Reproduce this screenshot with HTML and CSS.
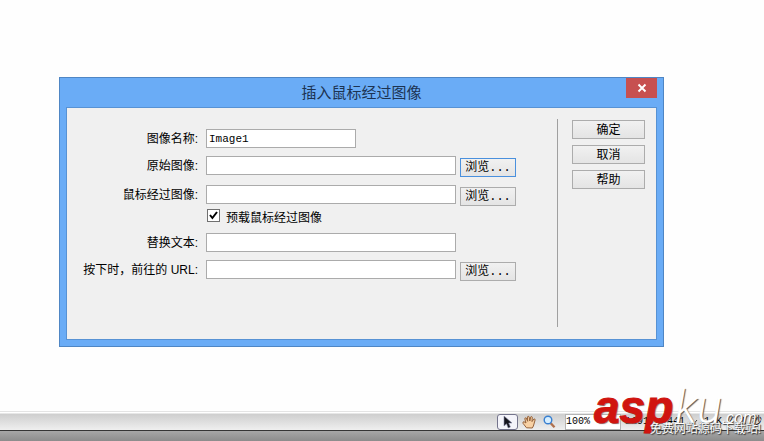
FILE: index.html
```html
<!DOCTYPE html>
<html lang="zh-CN">
<head>
    <meta charset="UTF-8">
    <meta name="viewport" content="width=device-width, initial-scale=1.0">
    <title>插入鼠标经过图像</title>
    <link rel="stylesheet" href="styles.css">
</head>
<body>

    <main class="workspace">
        <section class="dialog" role="dialog" aria-labelledby="dialogTitle">
            <header class="titlebar">
                <h1 id="dialogTitle">插入鼠标经过图像</h1>
                <button type="button" class="close" aria-label="关闭">
                    <svg width="10" height="10" viewBox="0 0 10 10"><path d="M1.5 1.5L8.5 8.5M8.5 1.5L1.5 8.5" stroke="#fff" stroke-width="1.9"/></svg>
                </button>
            </header>

            <form class="panel">
                <div class="fields">
                    <label for="imageName">图像名称:</label>
                    <input type="text" id="imageName" class="short" value="Image1">

                    <label for="original">原始图像:</label>
                    <input type="text" id="original">
                    <button type="button" class="browse active">浏览...</button>

                    <label for="rollover">鼠标经过图像:</label>
                    <input type="text" id="rollover">
                    <button type="button" class="browse">浏览...</button>

                    <div class="check">
                        <input type="checkbox" id="preload" checked>
                        <label for="preload">预载鼠标经过图像</label>
                    </div>

                    <label for="altText">替换文本:</label>
                    <input type="text" id="altText">

                    <label for="url">按下时，前往的 URL:</label>
                    <input type="text" id="url">
                    <button type="button" class="browse">浏览...</button>
                </div>

                <div class="actions">
                    <button type="button">确定</button>
                    <button type="button">取消</button>
                    <button type="button">帮助</button>
                </div>
            </form>
        </section>
    </main>

    <footer class="statusbar">
        <button type="button" class="tool selected" aria-label="选取工具">
            <svg width="12" height="14" viewBox="0 0 12 14"><path d="M2 1V11L4.5 8.8L6.2 13L8.4 12L6.7 8H10Z" fill="#15151d" stroke="#888ca8" stroke-width=".6"/></svg>
        </button>
        <button type="button" class="tool" aria-label="手形工具">
            <svg width="15" height="14" viewBox="0 0 15 14"><path d="M4.5 12.8L1 8.3Q.5 6.7 2 6.7L4 8L2.8 3.8Q2.9 2.3 4.2 3L5.7 6.3L5.4 2Q6 .5 7.1 1.7L7.8 6L8.8 1.8Q9.8 1 10.3 2.3L10 6.6L11.8 4Q13.2 3.4 13.1 5L11.4 11L10.3 13Z" fill="#f8d1a4" stroke="#96633c"/></svg>
        </button>
        <button type="button" class="tool" aria-label="缩放工具">
            <svg width="13" height="14" viewBox="0 0 13 14"><path d="M7.5 8L11.5 12.3" stroke="#b0714e" stroke-width="2.4"/><circle cx="5" cy="5" r="3.8" fill="#d6eeff" stroke="#387fd0" stroke-width="1.4"/></svg>
        </button>
        <select class="zoom" aria-label="缩放比率">
            <option>100%</option>
        </select>
        <div class="info">
            <span>1191 x 441</span>
            <svg width="7" height="5" viewBox="0 0 7 5"><path d="M1 1L3.5 4L6 1" fill="none" stroke="#444"/></svg>
            <span>1 K / 1 秒</span>
        </div>
    </footer>
    <div class="edge"></div>

    <div class="watermark">
        <div class="brand"><b>asp</b><i>ku</i><small>.com</small></div>
        <p>免费网站源码下载站!</p>
    </div>

</body>
</html>
```
FILE: styles.css
```css
* {
    box-sizing: border-box;
}
body {
    position: relative;
    display: flex;
    flex-direction: column;
    min-height: 100vh;
    margin: 0;
    background-color: #fefefe;
    color: black;
    font: 12px/18px "Liberation Sans", "Noto Sans CJK SC", sans-serif;
}
button, input, select {
    margin: 0;
    padding: 0;
    color: black;
    font: inherit;
}
.workspace {
    flex: 1;
    padding: 77px 100px 0 59px;
}
.dialog {
    padding: 0 6px 6px;
    border: 1px solid #4f86c4;
    background-color: #6aacf6;
}
.titlebar {
    display: grid;
    grid-template-columns: 31px 1fr 31px;
    align-items: start;
    height: 29px;
}
.titlebar h1 {
    grid-column: 2;
    margin: 0;
    color: #1c3352;
    font-size: 15px;
    font-weight: normal;
    line-height: 30px;
    text-align: center;
}
.close {
    display: flex;
    align-items: center;
    justify-content: center;
    height: 20px;
    border: none;
    background-color: #c75050;
}
.panel {
    display: flex;
    justify-content: space-between;
    padding: 11px 11px 12px 10px;
    border: 1px solid #5792d4;
    background-color: #f0f0f0;
}
.fields {
    display: grid;
    grid-template-columns: 125px 250px 56px;
    grid-template-rows: 27px 29px 24px 24px 27px;
    column-gap: 4px;
    align-items: start;
    padding-top: 10px;
}
.fields > label {
    grid-column: 1;
    padding-right: 4px;
    line-height: 20px;
    text-align: right;
    white-space: nowrap;
}
.fields > input {
    grid-column: 2;
    width: 100%;
    height: 19px;
    padding: 0 2px;
    border: 1px solid #ababab;
    background-color: white;
    font: 11px "Liberation Mono", monospace;
}
.fields > .short {
    width: 150px;
}
.browse, .actions button {
    height: 19px;
    border: 1px solid #acacac;
    background: linear-gradient(#f1f1f1, #e4e4e4);
    line-height: 16px;
}
.browse {
    margin-top: 2px;
    font-family: "Liberation Mono", "Noto Sans CJK SC", monospace;
}
.fields .active {
    border-color: #4a90dd;
}
.check {
    grid-column: 2 / 4;
    display: flex;
    gap: 6px;
    padding-left: 1px;
}
.check input {
    appearance: none;
    width: 13px;
    height: 13px;
    border: 1px solid #707070;
    background-color: white;
}
.check input:checked {
    background-image: url("data:image/svg+xml,%3Csvg xmlns='http://www.w3.org/2000/svg' viewBox='0 0 11 11'%3E%3Cpath d='M2 5L4.4 8L9 2' fill='none' stroke='black' stroke-width='2'/%3E%3C/svg%3E");
}
.actions {
    display: flex;
    flex-direction: column;
    gap: 6px;
    width: 88px;
    min-height: 208px;
    padding: 1px 0 0 14px;
    border-left: 1px solid #a0a0a0;
}
.statusbar {
    display: flex;
    align-items: center;
    justify-content: flex-end;
    gap: 2px;
    height: 20px;
    padding-top: 1px;
    border-top: 1px solid #e4e4e4;
    border-bottom: 1px solid #343434;
    background: linear-gradient(white 1px, #cecece 2px, #efefef);
    font-family: "Liberation Mono", "Noto Sans CJK SC", monospace;
    font-size: 10px;
}
.tool {
    display: flex;
    align-items: center;
    justify-content: center;
    width: 18px;
    height: 16px;
    border: none;
    background: none;
}
.selected {
    width: 21px;
    border: 1px solid #74748c;
    border-radius: 3px;
    background-color: #f4f4fa;
}
.zoom {
    width: 56px;
    height: 16px;
    margin-left: 5px;
    border: 1px solid #b4b4b4;
    appearance: none;
    background: white url("data:image/svg+xml,%3Csvg xmlns='http://www.w3.org/2000/svg' width='7' height='5'%3E%3Cpath d='M1 1L3.5 4L6 1' fill='none' stroke='%23444'/%3E%3C/svg%3E") no-repeat right 3px center;
    line-height: 14px;
}
.info {
    display: flex;
    align-items: center;
    justify-content: space-between;
    width: 141px;
    padding: 0 2px;
    white-space: nowrap;
}
.edge {
    height: 10px;
    background: linear-gradient(#a6a6a6, #8c8c8c);
}
/* site mark over the bottom right corner */
.watermark {
    position: absolute;
    right: 3px;
    bottom: 4px;
    width: 167px;
    color: white;
    white-space: nowrap;
}
.brand {
    display: flex;
    align-items: baseline;
    height: 38px;
    font-style: italic;
    line-height: 48px;
}
.brand b {
    color: #d0140f;
    font-size: 46px;
    text-shadow: 1px 1px 1px #777;
    -webkit-text-stroke: 1px #d0140f;
}
.brand i {
    padding-left: 2px;
    font-family: Roboto, "Liberation Sans", sans-serif;
    font-size: 46px;
    font-weight: 300;
    text-shadow: 1px 1px 1px #555;
}
.brand small {
    font-size: 16px;
    text-shadow: 1px 1px 1px #333;
}
.watermark p {
    margin: 0;
    line-height: 16px;
    text-align: right;
    text-shadow: 1px 1px 1px #333, 0 0 1px #555;
}
```
